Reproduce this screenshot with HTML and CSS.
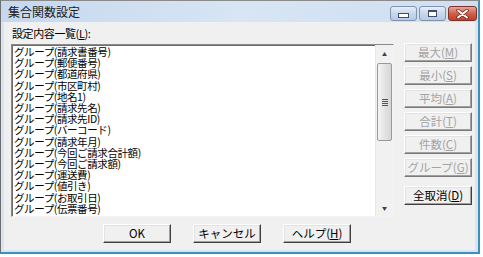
FILE: index.html
```html
<!DOCTYPE html>
<html lang="ja">
<head>
  <meta charset="UTF-8" />
  <title>集合関数設定</title>
  <link rel="stylesheet" href="styles.css">
</head>
<body>
  <div class="window">
    <div class="titlebar">
      <span class="title">集合関数設定</span>
      <div class="caption">
        <span class="cap cap-min"><i></i></span>
        <span class="cap cap-max"><i></i></span>
        <span class="cap cap-close">
          <svg width="13" height="10" viewBox="0 0 13 10">
            <path d="M2 1.5 L11 8.5 M11 1.5 L2 8.5" stroke="#6b1f14" stroke-width="3.4" stroke-linecap="round"/>
            <path d="M2 1.5 L11 8.5 M11 1.5 L2 8.5" stroke="#fff" stroke-width="2" stroke-linecap="round"/>
          </svg>
        </span>
      </div>
    </div>
    <div class="client">
      <div class="main">
        <div class="left">
          <div class="label">設定内容一覧(<u>L</u>):</div>
          <div class="listbox">
            <ul class="items">
              <li>グループ(請求書番号)</li>
              <li>グループ(郵便番号)</li>
              <li>グループ(都道府県)</li>
              <li>グループ(市区町村)</li>
              <li>グループ(地名1)</li>
              <li>グループ(請求先名)</li>
              <li>グループ(請求先ID)</li>
              <li>グループ(バーコード)</li>
              <li>グループ(請求年月)</li>
              <li>グループ(今回ご請求合計額)</li>
              <li>グループ(今回ご請求額)</li>
              <li>グループ(運送費)</li>
              <li>グループ(値引き)</li>
              <li>グループ(お取引日)</li>
              <li>グループ(伝票番号)</li>
            </ul>
            <div class="scrollbar">
              <div class="arrow">&#9650;</div>
              <div class="track">
                <div class="thumb"><span class="grip"></span></div>
              </div>
              <div class="arrow">&#9660;</div>
            </div>
          </div>
        </div>
        <div class="side">
          <button class="btn" disabled>最大(<u>M</u>)</button>
          <button class="btn" disabled>最小(<u>S</u>)</button>
          <button class="btn" disabled>平均(<u>A</u>)</button>
          <button class="btn" disabled>合計(<u>T</u>)</button>
          <button class="btn" disabled>件数(<u>C</u>)</button>
          <button class="btn" disabled>グループ(<u>G</u>)</button>
          <button class="btn btn-clear">全取消(<u>D</u>)</button>
        </div>
      </div>
      <div class="footer">
        <button class="btn">OK</button>
        <button class="btn">キャンセル</button>
        <button class="btn">ヘルプ(<u>H</u>)</button>
      </div>
    </div>
  </div>
</body>
</html>
```

FILE: styles.css
```css
body {
  margin: 0;
  background: #ffffff;
  font-family: "Noto Sans CJK JP", "Noto Sans", sans-serif;
  color: #000;
}
.window {
  box-sizing: border-box;
  width: 480px;
  height: 254px;
  background: #d6e4f3;
  border-left: 1px solid #6e6e6e;
  border-top: 1px solid #8a8a8a;
  border-right: 2px solid #3a92bb;
  border-bottom: 2px solid #3a92bb;
  display: flex;
  flex-direction: column;
}
.titlebar {
  height: 21px;
  display: flex;
  align-items: flex-start;
  background: linear-gradient(to right, #c5d8ee, #d7e5f4 50%, #cfdff1);
}
.title {
  padding-left: 7px;
  font-size: 12px;
  line-height: 21px;
  color: #1a1a1a;
}
.caption {
  margin-left: auto;
  margin-right: 1px;
  margin-top: 5px;
  display: flex;
  gap: 2px;
}
.cap {
  box-sizing: border-box;
  height: 15px;
  width: 27px;
  border: 1px solid #7f93b0;
  border-radius: 3px;
  background: linear-gradient(#e6eef8, #c8d7ea 50%, #b8cbe3);
  display: flex;
  align-items: center;
  justify-content: center;
}
.cap-min i {
  display: block;
  width: 9px;
  height: 3px;
  margin-top: 4px;
  background: #fff;
  border: 1px solid #3d4f6a;
}
.cap-max i {
  display: block;
  box-sizing: border-box;
  width: 9px;
  height: 7px;
  border: 1px solid #3d4f6a;
  border-top-width: 2px;
  background: #fff;
}
.cap-close {
  width: 29px;
  border-color: #7d3126;
  background: linear-gradient(#e9a597, #d0604e 50%, #c0402c);
}
.client {
  flex: 1;
  margin: 0 3px 2px 3px;
  background: #f0f0f0;
  padding: 4px 2px 0 7px;
  display: flex;
  flex-direction: column;
}
.main {
  display: flex;
}
.left {
  width: 383px;
}
.label {
  font-size: 11px;
  letter-spacing: -0.4px;
  line-height: 14px;
  padding-left: 1px;
}
u {
  text-decoration-thickness: 1px;
  text-underline-offset: 1px;
}
.listbox {
  box-sizing: border-box;
  margin-top: 4px;
  height: 173px;
  background: #fff;
  border: 1px solid;
  border-color: #8a8a8a #f3f3f3 #f3f3f3 #8a8a8a;
  box-shadow: inset 1px 1px 0 #6c6c6c;
  display: flex;
}
.items {
  flex: 1;
  margin: 0;
  padding: 1px 0 0 2px;
  list-style: none;
  overflow: hidden;
  font-size: 10.5px;
  letter-spacing: -0.4px;
  line-height: 11.2px;
}
.items li {
  white-space: nowrap;
}
.scrollbar {
  width: 17px;
  background: #f1f1f1;
  border-left: 1px solid #e8e8e8;
  display: flex;
  flex-direction: column;
}
.arrow {
  height: 17px;
  font-size: 5px;
  line-height: 17px;
  text-align: center;
  color: #404040;
}
.track {
  flex: 1;
  padding-top: 1px;
}
.thumb {
  box-sizing: border-box;
  height: 78px;
  margin: 0 1px;
  border: 1px solid #9a9a9a;
  border-radius: 2px;
  background: linear-gradient(to right, #f4f4f4, #e4e4e4 50%, #d6d6d6);
  display: flex;
  align-items: center;
  justify-content: center;
}
.grip {
  width: 6px;
  height: 7px;
  background: repeating-linear-gradient(#555 0 1px, transparent 1px 2px);
}
.side {
  margin-left: 10px;
  padding-top: 17px;
  display: flex;
  flex-direction: column;
  gap: 4px;
}
.btn {
  box-sizing: border-box;
  width: 68px;
  height: 19px;
  padding: 0;
  font-family: "Noto Sans CJK JP", "Noto Sans", sans-serif;
  font-size: 11.5px;
  line-height: 15px;
  color: #000;
  background: #f0f0f0;
  border: 1px solid;
  border-color: #ffffff #404040 #404040 #ffffff;
  box-shadow: inset -1px -1px 0 #a0a0a0, inset 1px 1px 0 #e3e3e3;
}
.btn:disabled {
  color: #a3a3a3;
  border-color: #ffffff #7a7a7a #7a7a7a #ffffff;
}
.btn-clear {
  margin-top: 5px;
}
.footer {
  margin-top: 7px;
  padding-left: 92px;
  display: flex;
  gap: 22px;
}
```
